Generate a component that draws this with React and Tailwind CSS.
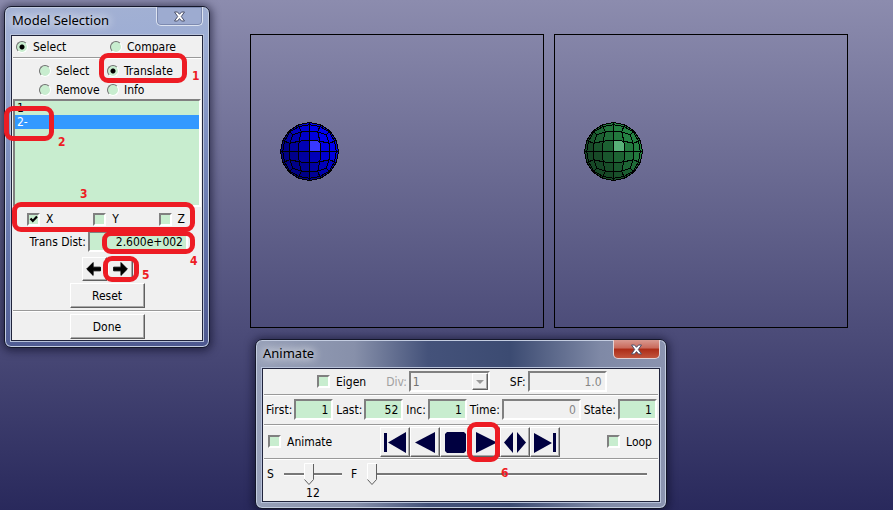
import React, { useState } from 'react';

const SUNKEN = 'border-2 border-t-[#808080] border-l-[#808080] border-b-white border-r-white';
const RAISED =
  'bg-[#f0f0f0] border border-t-white border-l-white border-b-[#606060] border-r-[#606060] shadow-[inset_-1px_-1px_0_#a8a8a8]';

const DIVISIONS = 4;

// point on a unit sphere for a cube face, u and v are angles in degrees
const facePoint = (face, u, v) => {
  const a = Math.tan((u * Math.PI) / 180);
  const b = Math.tan((v * Math.PI) / 180);
  const n = Math.sqrt(1 + a * a + b * b);
  const faces = {
    front: [a, b, 1],
    right: [1, b, a],
    left: [-1, b, a],
    top: [a, 1, b],
    bottom: [a, -1, b],
  };
  return faces[face].map((c) => c / n);
};

const buildFacets = () => {
  const facets = [];
  const step = 90 / DIVISIONS;
  ['front', 'right', 'left', 'top', 'bottom'].forEach((face) => {
    for (let i = 0; i < DIVISIONS; i++) {
      for (let j = 0; j < DIVISIONS; j++) {
        const u = -45 + i * step;
        const v = -45 + j * step;
        const points = [
          facePoint(face, u, v),
          facePoint(face, u + step, v),
          facePoint(face, u + step, v + step),
          facePoint(face, u, v + step),
        ];
        const center = facePoint(face, u + step / 2, v + step / 2);
        if (center[2] > 0) facets.push({ id: `${face}-${i}-${j}`, points, center, hot: face === 'front' && i === 2 && j === 2 });
      }
    }
  });
  return facets;
};

const FACETS = buildFacets();

const Sphere = ({ dark, light, highlight }) => (
  <g transform="translate(58.5 116.5)" shapeRendering="crispEdges">
    {FACETS.map(({ id, points, center, hot }) => {
      const t = Math.max(0, Math.min(1, 0.45 + center[0] * 0.6 + center[1] * 0.5));
      const mix = dark.map((c, k) => Math.round(c + (light[k] - c) * t));
      return (
        <polygon
          key={id}
          points={points.map((p) => `${p[0] * 29},${-p[1] * 29}`).join(' ')}
          fill={hot ? highlight : `rgb(${mix.join(',')})`}
          stroke="#000"
          strokeWidth="1"
        />
      );
    })}
  </g>
);

const Viewport = ({ label, ...colors }) => (
  <div className="flex-1 aspect-square border border-black">
    <svg viewBox="0 0 292 292" className="block w-full h-full" role="img" aria-label={label}>
      <Sphere {...colors} />
    </svg>
  </div>
);

const Window = ({ title, active, children }) => (
  <section
    className={`rounded-[7px] border border-[#14172a] shadow-[inset_0_0_0_1px_#c3cce0,0_1px_8px_2px_rgba(10,10,35,0.6)] px-[6px] pb-[6px] ${
      active
        ? 'bg-[linear-gradient(to_right,#97a0b8_0%,#8790aa_24%,#44527a_42%,#3c4b72_62%,#7f89a6_84%,#8b94b0_100%)]'
        : 'bg-[linear-gradient(175deg,#a3b1d3_0%,#9dadd4_14%,#7f90c0_40%,#6272a8_70%,#4d588f_100%)]'
    }`}
  >
    <header className="flex justify-between h-[28px] pl-px">
      <h2 className="font-['Noto_Sans'] text-[13px] leading-[27px] text-black [text-shadow:0_0_8px_#fff,0_0_12px_#fff]">{title}</h2>
      <button
        aria-label="Close"
        className={`flex items-center justify-center w-[47px] h-[19px] border border-t-0 rounded-b-[5px] ${
          active
            ? 'border-[#e3d3d6] bg-[linear-gradient(#d99a91_0%,#c9695a_45%,#ac2c17_50%,#c2543d_100%)]'
            : 'border-[#dde3f0] shadow-[inset_0_0_0_1px_#7d8ab0] bg-[#9dabd0]'
        }`}
      >
        <svg width="13" height="11" viewBox="0 0 13 11">
          <path
            d="M1.500 1h3l2 2.300L8.500 1h3L8.300 5.500l3.200 4.500h-3l-2-2.400L4.500 10h-3l3.200-4.500z"
            fill="#fff"
            stroke="#4b506a"
            strokeWidth="1"
          />
        </svg>
      </button>
    </header>
    <div className="bg-[#f0f0f0] border border-[#20243c] shadow-[0_0_0_1px_#b8c2da]">{children}</div>
  </section>
);

const Radio = ({ name, label, defaultChecked }) => (
  <label className="flex items-center gap-[5px]">
    <input
      type="radio"
      name={name}
      defaultChecked={defaultChecked}
      className="appearance-none w-[12px] h-[12px] rounded-full bg-[#c8edcf] border border-t-[#707070] border-l-[#707070] border-b-white border-r-white checked:bg-[radial-gradient(circle,#000_2px,#c8edcf_3px)]"
    />
    {label}
  </label>
);

const Checkbox = ({ label, defaultChecked }) => (
  <label className="flex items-center gap-[6px]">
    <span className="grid">
      <input
        type="checkbox"
        defaultChecked={defaultChecked}
        className={`peer col-start-1 row-start-1 appearance-none w-[13px] h-[13px] bg-[#c8edcf] ${SUNKEN}`}
      />
      <svg viewBox="0 0 13 13" className="col-start-1 row-start-1 w-[13px] h-[13px] pointer-events-none invisible peer-checked:visible">
        <path d="M3.500 5.500l2.300 2.500 4.200-4.500" fill="none" stroke="#000" strokeWidth="2.200" />
      </svg>
    </span>
    {label}
  </label>
);

const Field = ({ label, value, width, disabled }) => (
  <label className="flex items-center gap-[2px]">
    <span className="whitespace-nowrap">{label}</span>
    <input
      defaultValue={value}
      disabled={disabled}
      className={`${width} h-[21px] px-[3px] text-right ${SUNKEN} ${disabled ? 'bg-[#f0f0f0] text-[#858585]' : 'bg-[#c8edcf]'}`}
    />
  </label>
);

const Divider = () => <hr className="mx-px border-0 border-t border-[#999] shadow-[0_1px_0_#fff]" />;

const Slider = ({ label, value, min, max, thumbX, className, children }) => (
  <label className={`flex gap-[10px] ${className}`}>
    <span className="leading-[22px]">{label}</span>
    <span className="relative flex-1 h-[22px]">
      <span className="flex items-center h-[22px]">
        <span className="flex-1 h-[3px] border-t-2 border-b border-t-[#777] border-b-white" />
      </span>
      <svg width="11" height="23" className={`absolute top-0 ${thumbX}`}>
        <path d="M.5.500h9v16l-4.500 5-4.500-5z" fill="#f0f0f0" />
        <path d="M.5 16.500V.500h9" fill="none" stroke="#fff" />
        <path d="M.5 16.500l4.500 5 4.500-5V1" fill="none" stroke="#606060" />
      </svg>
      <input type="range" min={min} max={max} defaultValue={value} className="absolute inset-0 w-full h-full opacity-0" />
      {children}
    </span>
  </label>
);

const PLAYBACK = [
  { name: 'First state', d: 'M3 5h3v19H3zM25 4v21L7 14.500z' },
  { name: 'Play backward', d: 'M24 4v21L4 14.500z' },
  { name: 'Stop', d: 'M6 4h17l2 2v17l-2 2H6l-2-2V6z' },
  { name: 'Play forward', d: 'M5 4v21l21-10.500z' },
  { name: 'Forward and backward', d: 'M12 4v21L3 14.500zM16 4v21l9-10.500z' },
  { name: 'Last state', d: 'M3 5v20l18-10zM22 5h3v19h-3z' },
];

const ModelSelection = () => {
  const [selected, setSelected] = useState('2-');

  return (
    <Window title="Model Selection">
      <div className="flex flex-col">
        <div className="grid grid-cols-[94px_auto] h-[21px] pl-[4px]">
          <Radio name="mode" label="Select" defaultChecked />
          <Radio name="mode" label="Compare" />
        </div>
        <Divider />
        <div className="grid grid-cols-[68px_auto] pl-[27px] pt-[3px] h-[41px]">
          <Radio name="action" label="Select" />
          <Radio name="action" label="Translate" defaultChecked />
          <Radio name="action" label="Remove" />
          <Radio name="action" label="Info" />
        </div>
        <ul role="listbox" aria-label="Models" className={`mx-px h-[108px] bg-[#c8edcf] ${SUNKEN}`}>
          {['1', '2-'].map((item) => (
            <li key={item} role="option" aria-selected={selected === item}>
              <button
                onClick={() => setSelected(item)}
                className={`block w-full h-[14px] px-[2px] text-left leading-[14px] ${selected === item ? 'bg-[#3399ff] text-white' : ''}`}
              >
                {item}
              </button>
            </li>
          ))}
        </ul>
        <div className="flex justify-between h-[24px] pl-[15px] pr-[17px]">
          <Checkbox label="X" defaultChecked />
          <Checkbox label="Y" />
          <Checkbox label="Z" />
        </div>
        <div className="self-end pr-[14px]">
          <Field label="Trans Dist:" value="2.600e+002" width="w-[100px]" />
        </div>
        <div className="flex justify-center gap-px pt-[5px]">
          <button aria-label="Translate left" className={`w-[25px] h-[24px] ${RAISED}`}>
            <svg viewBox="0 0 25 24" className="block w-full h-full">
              <path d="M4 12l7-7v5h8v4h-8v5z" stroke="#000" strokeLinejoin="round" />
            </svg>
          </button>
          <button aria-label="Translate right" className={`w-[25px] h-[24px] ${RAISED}`}>
            <svg viewBox="0 0 25 24" className="block w-full h-full">
              <path d="M20 12l-7-7v5H5v4h8v5z" stroke="#000" strokeLinejoin="round" />
            </svg>
          </button>
        </div>
        <button className={`self-center mt-[2px] mb-[2px] w-[75px] h-[25px] ${RAISED}`}>Reset</button>
        <Divider />
        <button className={`self-center mt-[3px] mb-px w-[75px] h-[25px] ${RAISED}`}>Done</button>
      </div>
    </Window>
  );
};

const Animate = () => (
  <Window title="Animate" active>
    <div className="flex items-center h-[25px] pl-[54px]">
      <Checkbox label="Eigen" />
      <label className="flex items-center gap-[2px] ml-[20px] text-[#a0a0a0]">
        Div:
        <span className="relative">
          <select disabled className={`appearance-none block w-[81px] h-[21px] px-[2px] bg-[#f0f0f0] text-[#707070] opacity-100 ${SUNKEN}`}>
            <option>1</option>
          </select>
          <span className={`absolute right-[2px] top-[2px] flex items-center justify-center w-[16px] h-[17px] pointer-events-none ${RAISED}`}>
            <svg width="8" height="4">
              <path d="M0 0h8L4 4z" fill="#999" />
            </svg>
          </span>
        </span>
      </label>
      <div className="ml-[20px]">
        <Field label="SF:" value="1.0" width="w-[79px]" disabled />
      </div>
    </div>
    <Divider />
    <div className="flex items-center justify-between h-[29px] pl-[3px] pr-[2px]">
      <Field label="First:" value="1" width="w-[39px]" />
      <Field label="Last:" value="52" width="w-[39px]" />
      <Field label="Inc:" value="1" width="w-[39px]" />
      <Field label="Time:" value="0" width="w-[79px]" disabled />
      <Field label="State:" value="1" width="w-[39px]" />
    </div>
    <Divider />
    <div className="flex items-center h-[33px] pl-[5px] pr-[7px]">
      <Checkbox label="Animate" />
      <div className="flex mx-auto">
        {PLAYBACK.map(({ name, d }) => (
          <button key={name} aria-label={name} className={`w-[30px] h-[30px] ${RAISED}`}>
            <svg viewBox="0 0 28 28" className="block w-full h-full">
              <path d={d} fill="#000040" />
            </svg>
          </button>
        ))}
      </div>
      <Checkbox label="Loop" />
    </div>
    <Divider />
    <div className="flex h-[42px] pl-[4px] pr-[12px] pt-[4px]">
      <Slider label="S" value="12" min="0" max="25" thumbX="left-[20px]" className="w-[75px]">
        <output className="block text-center leading-[16px]">12</output>
      </Slider>
      <Slider label="F" value="1" min="1" max="52" thumbX="left-0" className="flex-1 ml-[9px]" />
    </div>
  </Window>
);

const MARKS = [
  { n: 1, box: 'left-[99px] top-[53px] w-[88px] h-[30px]', text: 'left-[192px] top-[68px]' },
  { n: 2, box: 'left-[4px] top-[106px] w-[50px] h-[35px]', text: 'left-[58px] top-[134px]' },
  { n: 3, box: 'left-[12px] top-[202px] w-[183px] h-[30px]', text: 'left-[80px] top-[186px]' },
  { n: 4, box: 'left-[102px] top-[231px] w-[93px] h-[23px]', text: 'left-[190px] top-[253px]' },
  { n: 5, box: 'left-[103px] top-[256px] w-[36px] h-[26px]', text: 'left-[142px] top-[267px]' },
  { n: 6, box: 'left-[467px] top-[422px] w-[33px] h-[40px]', text: 'left-[501px] top-[465px]' },
];

export default function App() {
  return (
    <main className="relative min-h-screen overflow-hidden bg-[linear-gradient(#8c8cae,#29295c)] font-['DejaVu_Sans_Condensed','Noto_Sans',sans-serif] text-[12px] leading-[16px] text-black">
      <div className="flex gap-[10px] pl-[250px] pr-[45px] pt-[34px]">
        <Viewport label="Model 1" dark={[0, 0, 135]} light={[0, 0, 240]} highlight="#3838ff" />
        <Viewport label="Model 2" dark={[22, 72, 38]} light={[36, 130, 66]} highlight="#58b078" />
      </div>
      <div className="absolute left-[4px] top-[6px] w-[206px]">
        <ModelSelection />
      </div>
      <div className="absolute left-[255px] top-[339px] w-[412px]">
        <Animate />
      </div>
      {MARKS.map(({ n, box, text }) => (
        <React.Fragment key={n}>
          <div className={`absolute border-[5px] border-[#ed1c24] rounded-[9px] pointer-events-none ${box}`} />
          <span className={`absolute font-bold text-[#ed1c24] ${text}`}>{n}</span>
        </React.Fragment>
      ))}
    </main>
  );
}
